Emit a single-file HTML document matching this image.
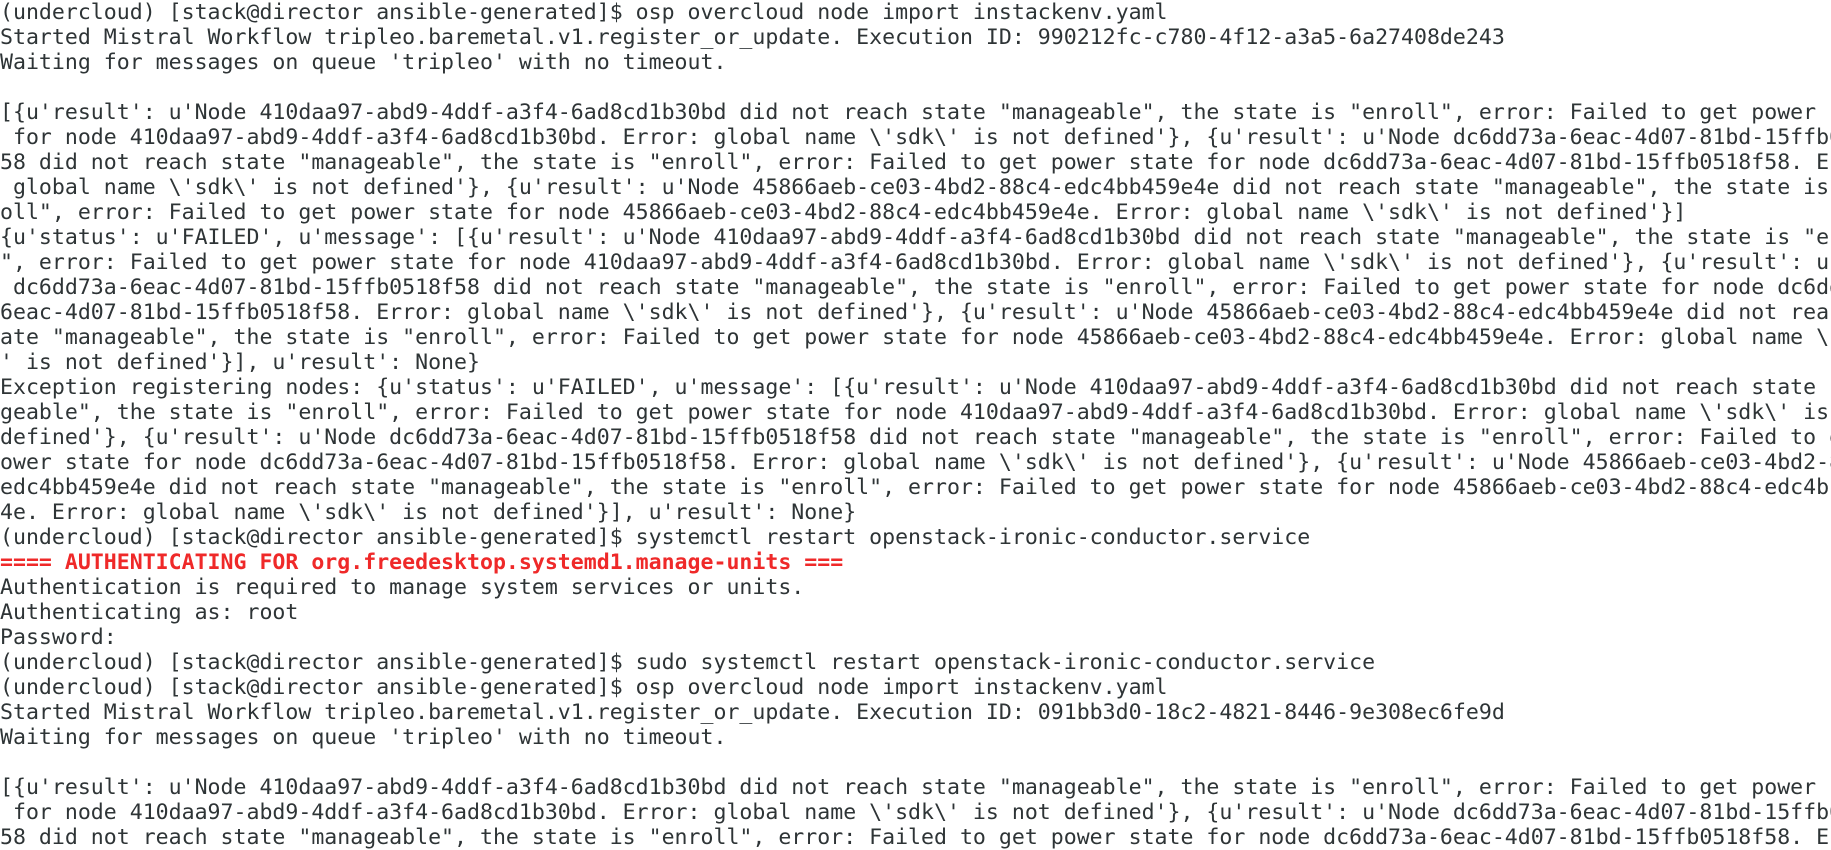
<!DOCTYPE html>
<html><head><meta charset="utf-8"><style>
html,body{margin:0;padding:0;background:#fff;width:1831px;height:845px;overflow:hidden}
pre{margin:0;position:absolute;left:0;top:0px;width:1831px;overflow:hidden;font-family:"DejaVu Sans Mono","Liberation Mono",monospace;font-size:21.55px;line-height:25px;color:#2e3436;white-space:pre}
.r{color:#ef2929;font-weight:bold}
</style></head><body><pre>(undercloud) [stack@director ansible-generated]$ osp overcloud node import instackenv.yaml
Started Mistral Workflow tripleo.baremetal.v1.register_or_update. Execution ID: 990212fc-c780-4f12-a3a5-6a27408de243
Waiting for messages on queue 'tripleo' with no timeout.

[{u'result': u'Node 410daa97-abd9-4ddf-a3f4-6ad8cd1b30bd did not reach state "manageable", the state is "enroll", error: Failed to get power state
 for node 410daa97-abd9-4ddf-a3f4-6ad8cd1b30bd. Error: global name \'sdk\' is not defined'}, {u'result': u'Node dc6dd73a-6eac-4d07-81bd-15ffb0518f
58 did not reach state "manageable", the state is "enroll", error: Failed to get power state for node dc6dd73a-6eac-4d07-81bd-15ffb0518f58. Error:
 global name \'sdk\' is not defined'}, {u'result': u'Node 45866aeb-ce03-4bd2-88c4-edc4bb459e4e did not reach state "manageable", the state is "enr
oll", error: Failed to get power state for node 45866aeb-ce03-4bd2-88c4-edc4bb459e4e. Error: global name \'sdk\' is not defined'}]
{u'status': u'FAILED', u'message': [{u'result': u'Node 410daa97-abd9-4ddf-a3f4-6ad8cd1b30bd did not reach state "manageable", the state is "enroll
", error: Failed to get power state for node 410daa97-abd9-4ddf-a3f4-6ad8cd1b30bd. Error: global name \'sdk\' is not defined'}, {u'result': u'Node
 dc6dd73a-6eac-4d07-81bd-15ffb0518f58 did not reach state "manageable", the state is "enroll", error: Failed to get power state for node dc6dd73a-
6eac-4d07-81bd-15ffb0518f58. Error: global name \'sdk\' is not defined'}, {u'result': u'Node 45866aeb-ce03-4bd2-88c4-edc4bb459e4e did not reach st
ate "manageable", the state is "enroll", error: Failed to get power state for node 45866aeb-ce03-4bd2-88c4-edc4bb459e4e. Error: global name \'sdk\
' is not defined'}], u'result': None}
Exception registering nodes: {u'status': u'FAILED', u'message': [{u'result': u'Node 410daa97-abd9-4ddf-a3f4-6ad8cd1b30bd did not reach state "mana
geable", the state is "enroll", error: Failed to get power state for node 410daa97-abd9-4ddf-a3f4-6ad8cd1b30bd. Error: global name \'sdk\' is not 
defined'}, {u'result': u'Node dc6dd73a-6eac-4d07-81bd-15ffb0518f58 did not reach state "manageable", the state is "enroll", error: Failed to get p
ower state for node dc6dd73a-6eac-4d07-81bd-15ffb0518f58. Error: global name \'sdk\' is not defined'}, {u'result': u'Node 45866aeb-ce03-4bd2-88c4-
edc4bb459e4e did not reach state "manageable", the state is "enroll", error: Failed to get power state for node 45866aeb-ce03-4bd2-88c4-edc4bb459e
4e. Error: global name \'sdk\' is not defined'}], u'result': None}
(undercloud) [stack@director ansible-generated]$ systemctl restart openstack-ironic-conductor.service
<span class="r">==== AUTHENTICATING FOR org.freedesktop.systemd1.manage-units ===</span>
Authentication is required to manage system services or units.
Authenticating as: root
Password: 
(undercloud) [stack@director ansible-generated]$ sudo systemctl restart openstack-ironic-conductor.service
(undercloud) [stack@director ansible-generated]$ osp overcloud node import instackenv.yaml
Started Mistral Workflow tripleo.baremetal.v1.register_or_update. Execution ID: 091bb3d0-18c2-4821-8446-9e308ec6fe9d
Waiting for messages on queue 'tripleo' with no timeout.

[{u'result': u'Node 410daa97-abd9-4ddf-a3f4-6ad8cd1b30bd did not reach state "manageable", the state is "enroll", error: Failed to get power state
 for node 410daa97-abd9-4ddf-a3f4-6ad8cd1b30bd. Error: global name \'sdk\' is not defined'}, {u'result': u'Node dc6dd73a-6eac-4d07-81bd-15ffb0518f
58 did not reach state "manageable", the state is "enroll", error: Failed to get power state for node dc6dd73a-6eac-4d07-81bd-15ffb0518f58. Error:
</pre></body></html>
